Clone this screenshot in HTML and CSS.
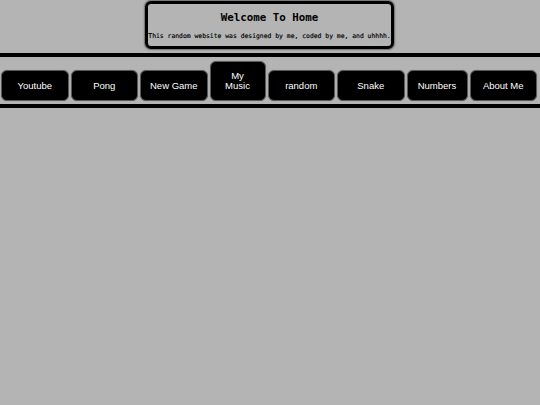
FILE: index.html
```html
<!DOCTYPE html>
<html>
<head>
<meta charset="utf-8">
<link rel="stylesheet" href="styles.css">
</head>
<body>
<header class="welcome">
  <h1 class="welcome-title">Welcome To Home</h1>
  <p class="welcome-sub">This random website was designed by me, coded by me, and uhhhh.</p>
</header>
<nav class="nav">
  <a class="nav-btn">Youtube</a>
  <a class="nav-btn">Pong</a>
  <a class="nav-btn">New Game</a>
  <a class="nav-btn nav-btn-music">My<br>Music</a>
  <a class="nav-btn">random</a>
  <a class="nav-btn">Snake</a>
  <a class="nav-btn nav-btn-numbers">Numbers</a>
  <a class="nav-btn">About Me</a>
</nav>
</body>
</html>
```
FILE: styles.css
```css
html, body {
  margin: 0;
  padding: 0;
  background: #b4b4b4;
}
body {
  width: 540px;
  height: 405px;
  overflow: hidden;
}
.welcome {
  box-sizing: border-box;
  width: 249px;
  height: 48px;
  margin: 1px 0 0 145px;
  border: 3px solid #000;
  border-radius: 6px;
  box-shadow: 0 0 0 1px #7a7a7a, 0 0 2px 1px #888;
  display: flex;
  flex-direction: column;
  align-items: center;
  font-family: "DejaVu Sans Mono", monospace;
}
.welcome-title {
  margin: 7px 0 0;
  font-size: 10.8px;
  font-weight: bold;
  line-height: 14px;
}
.welcome-sub {
  margin: 7px 0 0;
  font-size: 6.4px;
  line-height: 8px;
  white-space: nowrap;
  color: #000;
  -webkit-text-stroke: 0.15px #000;
}
.nav {
  box-sizing: border-box;
  margin-top: 4px;
  height: 55px;
  border-top: 4px solid #000;
  border-bottom: 4px solid #000;
  display: flex;
  align-items: flex-end;
  gap: 2px;
  padding: 0 3px 3px 1px;
}
.nav-btn {
  box-sizing: border-box;
  flex: 1 1 0;
  height: 31px;
  background: #000;
  color: #fff;
  border: 1.5px solid #5a5a5a;
  border-radius: 6px;
  box-shadow: 0 0 1px #777;
  display: flex;
  align-items: center;
  justify-content: center;
  text-align: center;
  font-family: "Liberation Sans", Arial, sans-serif;
  font-size: 9.5px;
  line-height: 10px;
}
.nav-btn-music {
  flex: 0 0 56px;
  height: 40px;
  align-items: flex-start;
  padding-top: 9px;
}
.nav-btn-numbers {
  flex: 0 0 61px;
}
```
